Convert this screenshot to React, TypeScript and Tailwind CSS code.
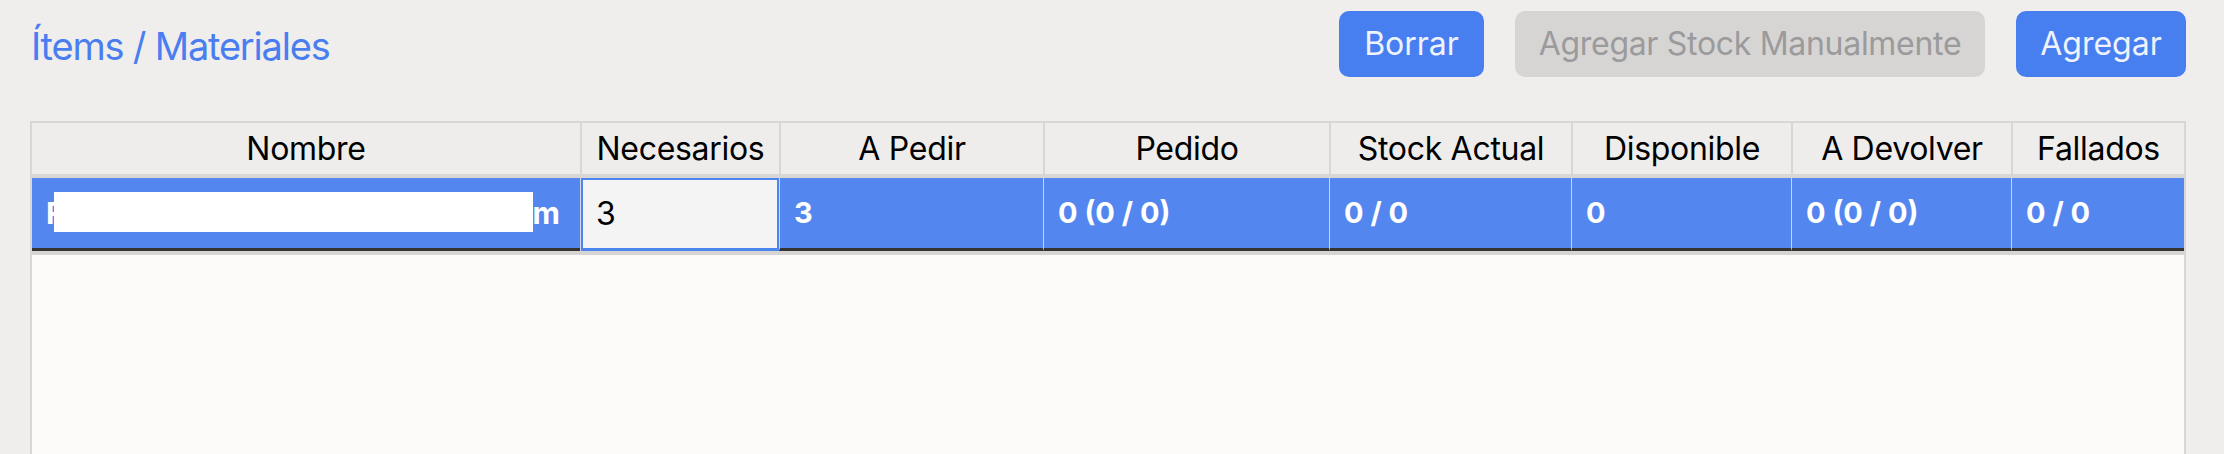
import React from "react";

const headers = [
  "Nombre",
  "Necesarios",
  "A Pedir",
  "Pedido",
  "Stock Actual",
  "Disponible",
  "A Devolver",
  "Fallados",
];

const values = ["3", "0 (0 / 0)", "0 / 0", "0", "0 (0 / 0)", "0 / 0"];

export default function App() {
  return (
    <div
      className="w-full h-[454px] overflow-hidden bg-[#efeeec]"
      style={{ fontFamily: "Inter, 'Noto Sans', sans-serif" }}
    >
      <div className="flex items-start justify-between pl-[31px] pr-[38px] pt-[11px]">
        <div className="text-[38px] leading-[46px] mt-[12px] text-[#4a7ef0] tracking-[-1.2px]">
          Ítems / Materiales
        </div>
        <div className="flex gap-[31px]">
          <button className="h-[66px] w-[145px] rounded-[10px] bg-[#477ef0] text-[32px] text-[#eef3fd]">
            Borrar
          </button>
          <button className="h-[66px] w-[470px] rounded-[10px] bg-[#d6d5d3] text-[32px] text-[#9b9a9c] tracking-[-0.3px]">
            Agregar Stock Manualmente
          </button>
          <button className="h-[66px] w-[170px] rounded-[10px] bg-[#477ef0] text-[32px] text-[#eef3fd]">
            Agregar
          </button>
        </div>
      </div>

      <div className="mt-[44px] ml-[30px] mr-[38px] border-2 border-b-0 border-[#d8d7d5]">
        <div className="grid grid-cols-[548px_199px_264px_286px_242px_220px_220px_173px] bg-[#eeedeb] border-b-4 border-[#d8d7d5]">
          {headers.map((h, i) => (
            <div
              key={h}
              className={`h-[51px] flex items-center justify-center text-[32px] text-black tracking-[-0.3px] ${
                i > 0 ? "border-l-2 border-[#d8d7d5]" : ""
              }`}
            >
              {h}
            </div>
          ))}
        </div>
        <div className="grid grid-cols-[548px_199px_264px_286px_242px_220px_220px_173px] bg-[#5387ef]">
          <div className="relative h-[73px] flex items-center pl-[14px] border-b-[3px] border-[#343434] text-[30px] font-bold text-white">
            <span>F</span>
            <span className="inline-block w-[469px]"></span>
            <span>m</span>
            <div className="absolute left-[22px] top-[14px] w-[479px] h-[40px] bg-white"></div>
          </div>
          <div className="h-[73px] border-l border-[#d0d5de] bg-[#5387ef]">
            <div className="h-full flex items-center pl-[13px] bg-[#f4f4f4] border-2 border-b-[3px] border-[#4c84f0] text-[32px] text-black">
              3
            </div>
          </div>
          {values.map((v, i) => (
            <div
              key={i}
              className="h-[73px] flex items-center pl-[14px] border-l border-l-[#d0d5de] border-b-[3px] border-b-[#343434] text-[29px] font-bold text-white"
            >
              {v}
            </div>
          ))}
        </div>
        <div className="h-[4px] bg-[#d6d5d3]"></div>
        <div className="h-[220px] bg-[#fcfbf9]"></div>
      </div>
    </div>
  );
}
